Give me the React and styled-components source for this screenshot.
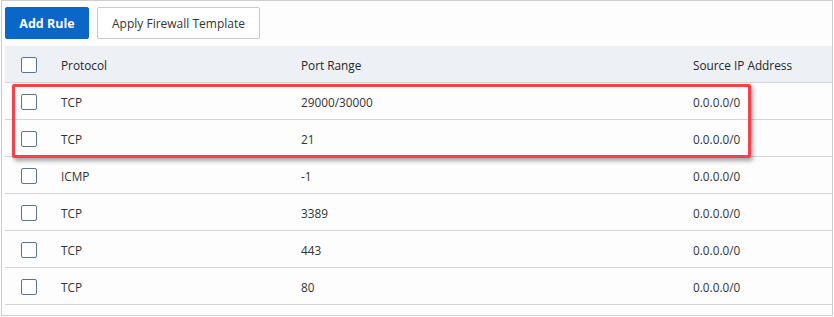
import React from 'react'
import styled, { createGlobalStyle } from 'styled-components'

const GlobalStyle = createGlobalStyle`
    body {
        margin: 0;
        background: #ffffff;
        font-family: 'Open Sans', 'Noto Sans', sans-serif;
    }
`;

const Frame = styled.div`
    margin-left: 1px;
    width: 832px;
    height: 316px;
    box-sizing: border-box;
    border: 1px solid #cdcdcd;
    padding: 6px 0 0 3px;
    background: #fdfdfd;
    overflow: hidden;
`;

const Toolbar = styled.div`
    display: flex;
    gap: 8px;
    height: 32px;
    margin-bottom: 7px;
`;

const Button = styled.button`
    height: 32px;
    width: ${props => props.width}px;
    box-sizing: border-box;
    padding: 0;
    white-space: nowrap;
    border-radius: 2px;
    font-family: 'Open Sans', 'Noto Sans', sans-serif;
    font-size: ${props => props.primary ? '12.5px' : '12px'};
    font-weight: ${props => props.primary ? 700 : 400};
    color: ${props => props.primary ? '#ffffff' : '#333333'};
    background: ${props => props.primary ? '#0a66c8' : '#ffffff'};
    border: 1px solid ${props => props.primary ? '#0a66c8' : '#c9c9c9'};
`;

const Table = styled.div`
    position: relative;
    width: 100%;
`;

const Row = styled.div`
    display: grid;
    grid-template-columns: 56px 240px 392px 1fr;
    align-items: center;
    height: 37px;
    box-sizing: border-box;
    padding-top: 2px;
    border-bottom: 1px solid #d5d5d5;
    background: ${props => props.head ? '#edf0f5' : 'transparent'};
    font-size: 11.8px;
    color: ${props => props.head ? '#262626' : '#333333'};
`;

const Cell = styled.div`
    white-space: nowrap;
`;

const CheckCell = styled.div`
    padding-left: 16px;
    display: flex;
    align-items: center;
`;

const Checkbox = styled.span`
    display: inline-block;
    width: 16px;
    height: 16px;
    box-sizing: border-box;
    border: 1.5px solid #5a7391;
    border-radius: 2px;
    background: #ffffff;
`;

const Highlight = styled.div`
    position: absolute;
    left: 7px;
    top: 38px;
    width: 739px;
    height: 74px;
    box-sizing: border-box;
    border: 3px solid #f2434a;
    border-radius: 2px;
    box-shadow: 2px 3px 4px rgba(0, 0, 0, 0.35);
    pointer-events: none;
`;

const rules = [
    { protocol: 'TCP', port: '29000/30000', source: '0.0.0.0/0' },
    { protocol: 'TCP', port: '21', source: '0.0.0.0/0' },
    { protocol: 'ICMP', port: '-1', source: '0.0.0.0/0' },
    { protocol: 'TCP', port: '3389', source: '0.0.0.0/0' },
    { protocol: 'TCP', port: '443', source: '0.0.0.0/0' },
    { protocol: 'TCP', port: '80', source: '0.0.0.0/0' },
];

export default function App() {
    return (
        <>
            <GlobalStyle />
            <Frame>
                <Toolbar>
                    <Button primary width={84}>Add Rule</Button>
                    <Button width={163}>Apply Firewall Template</Button>
                </Toolbar>
                <Table>
                    <Row head>
                        <CheckCell><Checkbox /></CheckCell>
                        <Cell>Protocol</Cell>
                        <Cell>Port Range</Cell>
                        <Cell>Source IP Address</Cell>
                    </Row>
                    {rules.map((r, i) => (
                        <Row key={i}>
                            <CheckCell><Checkbox /></CheckCell>
                            <Cell>{r.protocol}</Cell>
                            <Cell>{r.port}</Cell>
                            <Cell>{r.source}</Cell>
                        </Row>
                    ))}
                    <Highlight />
                </Table>
            </Frame>
        </>
    )
}
